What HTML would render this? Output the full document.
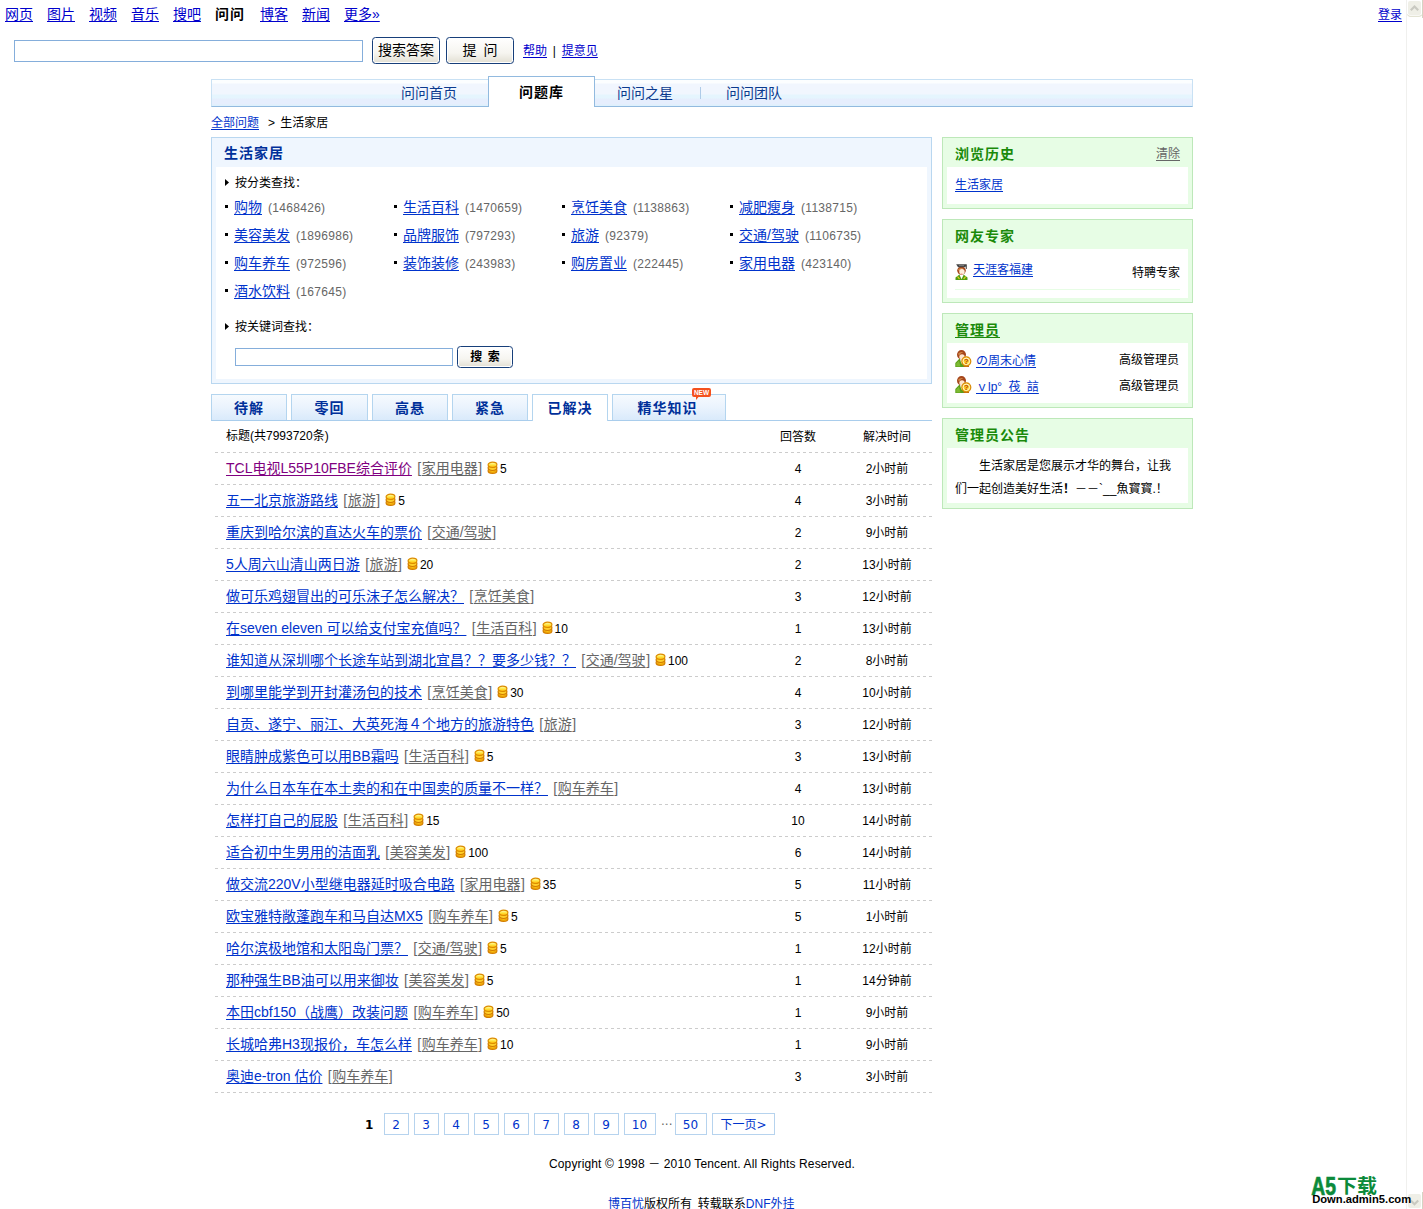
<!DOCTYPE html>
<html lang="zh-CN">
<head>
<meta charset="utf-8">
<title>生活家居 - 问问问题库</title>
<style>
html,body{margin:0;padding:0;background:#fff;}
body{width:1423px;height:1209px;position:relative;overflow:hidden;font-family:"Liberation Sans","Noto Sans CJK SC",sans-serif;font-size:12px;color:#000;line-height:14px;}
a{color:#03c;text-decoration:underline;text-underline-offset:2px;text-decoration-thickness:1px;}
h2{margin:0;font-size:14px;font-weight:bold;letter-spacing:1px;}
/* top nav */
#topnav{position:absolute;left:5px;top:5px;font-size:14px;line-height:18px;white-space:nowrap;}
#topnav a,#topnav b{display:inline-block;margin-right:14px;color:#00c;}
#topnav b{color:#000;margin-right:15px;letter-spacing:1px;}
#login{position:absolute;left:1378px;top:8px;font-size:12px;line-height:14px;color:#00c;}
#q{position:absolute;left:14px;top:40px;width:347px;height:20px;border:1px solid #85aedb;background:#fff;}
.btn{position:absolute;box-sizing:border-box;border:1px solid #173f7a;border-radius:3.5px;background:linear-gradient(#ffffff 0%,#f6f5f0 60%,#e2dfd3 100%);text-align:center;color:#000;box-shadow:inset 0 0 0 1px #fff;}
#b1{left:372px;top:37px;width:68px;height:27px;font-size:14px;line-height:25px;}
#b2{left:446px;top:37px;width:68px;height:27px;font-size:14px;line-height:25px;word-spacing:3px;}
#help{position:absolute;left:523px;top:44px;white-space:nowrap;word-spacing:2.5px;}
#help a{color:#00c;}
/* tab bar */
#bar{position:absolute;left:211px;top:79px;width:980px;height:26px;border:1px solid #c9e1f4;border-bottom-color:#92badf;background:linear-gradient(#fcfeff 0,#fcfeff 3px,#f1f6fe 4px,#f1f6fe 14px,#e5f5fe 15px,#e5f5fe 18px,#e6eefd 19px,#e6eefd 24px,#def0fc 25px);}
#bar a{position:absolute;top:5px;font-size:14px;line-height:16px;color:#0b3a8e;text-decoration:none;white-space:nowrap;}
#bar i{position:absolute;top:7px;width:1px;height:12px;background:#aecbe8;}
#cur{position:absolute;left:488px;top:76px;width:105px;height:30px;border:1px solid #92badf;border-bottom:0;background:#fff;text-align:center;font-size:14px;font-weight:bold;line-height:30px;letter-spacing:1px;}
#crumb{position:absolute;left:211px;top:116px;white-space:nowrap;}
#crumb span{position:absolute;left:57px;top:0;word-spacing:2px;}
/* main box */
#box{position:absolute;left:211px;top:137px;width:719px;height:245px;border:1px solid #b9d7f0;background:#eff6fe;}
#box h2{position:absolute;left:12px;top:6px;line-height:18px;color:#00309a;}
#boxin{position:absolute;left:4px;top:29px;width:711px;height:212px;background:#fff;}
.lbl{position:absolute;left:19px;margin-top:-1px;line-height:14px;white-space:nowrap;}
.tri{position:absolute;left:-10px;top:3px;width:4px;height:7px;background:#000;clip-path:polygon(0 0,100% 50%,0 100%);}
.cat{position:absolute;height:18px;line-height:18px;white-space:nowrap;font-size:14px;}
.cat .sq{display:inline-block;width:3px;height:3px;background:#000;vertical-align:middle;margin-right:6px;position:relative;top:-2px;}
.cat span{font-size:12px;color:#666;margin-left:6px;letter-spacing:0.3px;}
#kw{position:absolute;left:19px;top:181px;width:216px;height:16px;border:1px solid #85aedb;background:#fff;}
#b3{left:241px;top:179px;width:56px;height:22px;font-size:12px;line-height:20px;font-weight:bold;word-spacing:2px;}
/* tabs */
#tabs{position:absolute;left:211px;top:394px;width:721px;height:26px;border-bottom:1px solid #a9cdec;}
#tabs a{position:absolute;top:0;width:74px;height:25px;border:1px solid #b4d5ef;border-bottom:0;background:linear-gradient(#f6fafe 0%,#eaf3fd 50%,#d9eafb 100%);text-align:center;font-size:14px;font-weight:bold;line-height:27px;color:#00309a;text-decoration:none;letter-spacing:1px;}
#tabs a.on{background:#fff;height:26px;}
#new{position:absolute;left:481px;top:-6px;}
/* list */
#list{position:absolute;left:215px;top:421px;width:717px;}
#list .hd,#list .row{position:relative;height:32px;white-space:nowrap;background:repeating-linear-gradient(90deg,#ccc 0,#ccc 3px,transparent 3px,transparent 6px) 0 31px/100% 1px no-repeat;}
#list .hd{line-height:31px;}
#list .t{position:absolute;left:11px;top:0;line-height:31px;}
#list .n{position:absolute;top:1px;left:538px;width:90px;text-align:center;line-height:31px;}
#list .d{position:absolute;top:1px;left:627px;width:90px;text-align:center;line-height:31px;}
.row .t>a{font-size:14px;}
.row .t>a.v{color:#800080;}
.row .c{font-size:14px;color:#666;margin-left:2px;}
.row .c a{color:#666;margin:0 0.5px;}
.row .coin{vertical-align:middle;margin:0 2px 0 5px;position:relative;top:-2px;}
.row em{font-style:normal;}
/* sidebar */
.sb{position:absolute;left:942px;width:249px;border:1px solid #bde8b9;background:#e7fde5;}
.sb h2{position:absolute;left:12px;top:7px;line-height:18px;color:#1a8a0a;}
.sb .in{position:absolute;left:4px;top:29px;width:241px;background:#fff;}
.sb .r{position:absolute;right:12px;white-space:nowrap;}
.sb .l{position:absolute;white-space:nowrap;}
/* pager */
#pg{position:absolute;left:0;top:1113px;height:22px;font-family:"DejaVu Sans","Noto Sans CJK SC",sans-serif;font-size:12px;}
#pg a,#pg b,#pg i{position:absolute;top:0;height:20px;line-height:22px;text-align:center;font-style:normal;}
#pg b{line-height:24px;}
#pg i{line-height:24px;}
#pg a{border:1px solid #b6d3ee;text-decoration:none;color:#03c;text-indent:-1px;}
#copy{position:absolute;left:549px;top:1157px;white-space:nowrap;letter-spacing:0.135px;}
#foot{position:absolute;left:608px;top:1197px;white-space:nowrap;word-spacing:2.5px;}
#foot a{text-decoration:none;}
/* scrollbar + watermark */
#sbar{position:absolute;left:1406px;top:0;width:17px;height:1209px;background:#fff;}
#wm1{position:absolute;left:1310px;top:1173px;font-size:21px;line-height:24px;font-weight:bold;color:#0b8a3a;white-space:nowrap;letter-spacing:-0.5px;}
#wm2{position:absolute;left:1311px;top:1192px;font-size:11px;line-height:14px;font-weight:bold;color:#000;white-space:nowrap;font-family:"Liberation Sans",sans-serif;letter-spacing:0.2px;}
</style>
</head>
<body>
<svg width="0" height="0" style="position:absolute"><defs><linearGradient id="cg" x1="0" y1="0" x2="0" y2="1"><stop offset="0" stop-color="#fffcc0"/><stop offset="0.5" stop-color="#ffe640"/><stop offset="1" stop-color="#ffb000"/></linearGradient>
<g id="coin"><ellipse cx="5.5" cy="9.7" rx="4.4" ry="2.7" fill="#ffc61a" stroke="#d27c00" stroke-width="1.2"/><ellipse cx="5.5" cy="6.8" rx="4.4" ry="2.7" fill="#ffcf2a" stroke="#d27c00" stroke-width="1.2"/><ellipse cx="5.5" cy="3.8" rx="4.4" ry="2.7" fill="url(#cg)" stroke="#dc8c00" stroke-width="1.2"/><path d="M2.2 10.6Q5.5 12 8.8 10.6" stroke="#e89a00" stroke-width="1" fill="none"/></g>
<g id="grad"><path d="M0.5 16V13.5L4.5 10.5H8.5L12.5 13.5V16z" fill="#4f9d12"/><path d="M4.3 10.3L6.5 15.2L8.9 10.3z" fill="#fff"/><path d="M2.5 12.5L4.5 15M10.7 12.5L8.7 15" stroke="#f5d020" stroke-width="1.2"/><ellipse cx="6.5" cy="6.6" rx="4.3" ry="4" fill="#a5451a"/><path d="M3 5.2Q5.5 3.6 8.5 4.2Q6 5 4 7.5z" fill="#d08848"/><ellipse cx="7" cy="7.8" rx="2.7" ry="2.7" fill="#fdeedd"/><rect x="5.8" y="9.6" width="1.6" height="1" fill="#f08070"/><path d="M1.2 0.3H11.5L10.5 3.2H3z" fill="#444"/><path d="M4 1.6H9" stroke="#999" stroke-width="0.7"/><path d="M11.3 0.5V5" stroke="#444" stroke-width="1"/></g>
<g id="adm"><path d="M0.3 17V13L4.5 8.5H8.5L11 17z" fill="#5a9e18"/><path d="M1.2 16.5V13.6L4 10.8L5.5 16.5z" fill="#8cc63f" opacity="0.7"/><path d="M5 9L6.5 14L8 9z" fill="#fff"/><ellipse cx="6.5" cy="4.7" rx="4.5" ry="4.6" fill="#a5451a"/><path d="M3 3.8Q5 1.2 8.5 2.2Q6 2.8 4 5.5z" fill="#d08848"/><ellipse cx="7" cy="6.8" rx="2.7" ry="2.5" fill="#fde6cf"/><rect x="8.6" y="15.3" width="5.4" height="1.7" fill="#c06a10"/><circle cx="11.3" cy="11.3" r="4.5" fill="#ffd12c" stroke="#d98a08" stroke-width="1.2"/><circle cx="11.3" cy="11.3" r="3.2" fill="none" stroke="#fff" stroke-width="0.9" opacity="0.85"/><text x="11.3" y="14.2" font-size="8" font-weight="bold" text-anchor="middle" fill="#b8480a" font-family="Liberation Sans, sans-serif">?</text></g>
</defs></svg>
<div id="topnav"><a href="#">网页</a><a href="#">图片</a><a href="#">视频</a><a href="#">音乐</a><a href="#">搜吧</a><b>问问</b><a href="#">博客</a><a href="#">新闻</a><a href="#">更多»</a></div>
<a id="login" href="#">登录</a>
<div id="q"></div>
<div class="btn" id="b1">搜索答案</div>
<div class="btn" id="b2">提 问</div>
<div id="help"><a href="#">帮助</a> | <a href="#">提意见</a></div>
<div id="bar"><a href="#" style="left:189px">问问首页</a><a href="#" style="left:405px">问问之星</a><i style="left:488px"></i><a href="#" style="left:514px">问问团队</a></div>
<div id="cur">问题库</div>
<div id="crumb"><a href="#">全部问题</a><span>&gt; 生活家居</span></div>
<div id="box"><h2>生活家居</h2><div id="boxin">
<div class="lbl" style="top:10px"><i class="tri"></i>按分类查找：</div>
<div class="cat" style="left:9px;top:31px"><i class="sq"></i><a href="#">购物</a><span>(1468426)</span></div>
<div class="cat" style="left:178px;top:31px"><i class="sq"></i><a href="#">生活百科</a><span>(1470659)</span></div>
<div class="cat" style="left:346px;top:31px"><i class="sq"></i><a href="#">烹饪美食</a><span>(1138863)</span></div>
<div class="cat" style="left:514px;top:31px"><i class="sq"></i><a href="#">减肥瘦身</a><span>(1138715)</span></div>
<div class="cat" style="left:9px;top:59px"><i class="sq"></i><a href="#">美容美发</a><span>(1896986)</span></div>
<div class="cat" style="left:178px;top:59px"><i class="sq"></i><a href="#">品牌服饰</a><span>(797293)</span></div>
<div class="cat" style="left:346px;top:59px"><i class="sq"></i><a href="#">旅游</a><span>(92379)</span></div>
<div class="cat" style="left:514px;top:59px"><i class="sq"></i><a href="#">交通/驾驶</a><span>(1106735)</span></div>
<div class="cat" style="left:9px;top:87px"><i class="sq"></i><a href="#">购车养车</a><span>(972596)</span></div>
<div class="cat" style="left:178px;top:87px"><i class="sq"></i><a href="#">装饰装修</a><span>(243983)</span></div>
<div class="cat" style="left:346px;top:87px"><i class="sq"></i><a href="#">购房置业</a><span>(222445)</span></div>
<div class="cat" style="left:514px;top:87px"><i class="sq"></i><a href="#">家用电器</a><span>(423140)</span></div>
<div class="cat" style="left:9px;top:115px"><i class="sq"></i><a href="#">酒水饮料</a><span>(167645)</span></div>
<div class="lbl" style="top:154px"><i class="tri"></i>按关键词查找：</div>
<div id="kw"></div><div class="btn" id="b3">搜 索</div>
</div></div>
<div id="tabs"><a href="#" style="left:0">待解</a><a href="#" style="left:80px;width:75px">零回</a><a href="#" style="left:161px">高悬</a><a href="#" style="left:241px">紧急</a><a href="#" class="on" style="left:321px">已解决</a><a href="#" style="left:401px;width:112px;text-indent:-3px">精华知识</a><svg id="new" width="19" height="12" viewBox="0 0 19 12"><path d="M2 0h15a2 2 0 0 1 2 2v5a2 2 0 0 1-2 2H6.5L4 12V9H2a2 2 0 0 1-2-2V2a2 2 0 0 1 2-2z" fill="#f4511e"/><text x="9.5" y="7.2" font-size="6.5" font-weight="bold" text-anchor="middle" fill="#fff" font-family="Liberation Sans, sans-serif">NEW</text></svg></div>
<div id="list">
<div class="hd"><span class="t">标题(共7993720条)</span><span class="n">回答数</span><span class="d">解决时间</span></div>
<div class="row"><span class="t"><a href="#" class="v">TCL电视L55P10FBE综合评价</a> <span class="c">[<a href="#">家用电器</a>]</span><svg class="coin" width="11" height="13" viewBox="0 0 11 13"><use href="#coin"/></svg><em>5</em></span><span class="n">4</span><span class="d">2小时前</span></div>
<div class="row"><span class="t"><a href="#">五一北京旅游路线</a> <span class="c">[<a href="#">旅游</a>]</span><svg class="coin" width="11" height="13" viewBox="0 0 11 13"><use href="#coin"/></svg><em>5</em></span><span class="n">4</span><span class="d">3小时前</span></div>
<div class="row"><span class="t"><a href="#">重庆到哈尔滨的直达火车的票价</a> <span class="c">[<a href="#">交通/驾驶</a>]</span></span><span class="n">2</span><span class="d">9小时前</span></div>
<div class="row"><span class="t"><a href="#">5人周六山清山两日游</a> <span class="c">[<a href="#">旅游</a>]</span><svg class="coin" width="11" height="13" viewBox="0 0 11 13"><use href="#coin"/></svg><em>20</em></span><span class="n">2</span><span class="d">13小时前</span></div>
<div class="row"><span class="t"><a href="#">做可乐鸡翅冒出的可乐沫子怎么解决？</a> <span class="c">[<a href="#">烹饪美食</a>]</span></span><span class="n">3</span><span class="d">12小时前</span></div>
<div class="row"><span class="t"><a href="#">在seven eleven 可以给支付宝充值吗？</a> <span class="c">[<a href="#">生活百科</a>]</span><svg class="coin" width="11" height="13" viewBox="0 0 11 13"><use href="#coin"/></svg><em>10</em></span><span class="n">1</span><span class="d">13小时前</span></div>
<div class="row"><span class="t"><a href="#">谁知道从深圳哪个长途车站到湖北宜昌？？要多少钱？？</a> <span class="c">[<a href="#">交通/驾驶</a>]</span><svg class="coin" width="11" height="13" viewBox="0 0 11 13"><use href="#coin"/></svg><em>100</em></span><span class="n">2</span><span class="d">8小时前</span></div>
<div class="row"><span class="t"><a href="#">到哪里能学到开封灌汤包的技术</a> <span class="c">[<a href="#">烹饪美食</a>]</span><svg class="coin" width="11" height="13" viewBox="0 0 11 13"><use href="#coin"/></svg><em>30</em></span><span class="n">4</span><span class="d">10小时前</span></div>
<div class="row"><span class="t"><a href="#">自贡、遂宁、丽江、大英死海４个地方的旅游特色</a> <span class="c">[<a href="#">旅游</a>]</span></span><span class="n">3</span><span class="d">12小时前</span></div>
<div class="row"><span class="t"><a href="#">眼睛肿成紫色可以用BB霜吗</a> <span class="c">[<a href="#">生活百科</a>]</span><svg class="coin" width="11" height="13" viewBox="0 0 11 13"><use href="#coin"/></svg><em>5</em></span><span class="n">3</span><span class="d">13小时前</span></div>
<div class="row"><span class="t"><a href="#">为什么日本车在本土卖的和在中国卖的质量不一样？</a> <span class="c">[<a href="#">购车养车</a>]</span></span><span class="n">4</span><span class="d">13小时前</span></div>
<div class="row"><span class="t"><a href="#">怎样打自己的屁股</a> <span class="c">[<a href="#">生活百科</a>]</span><svg class="coin" width="11" height="13" viewBox="0 0 11 13"><use href="#coin"/></svg><em>15</em></span><span class="n">10</span><span class="d">14小时前</span></div>
<div class="row"><span class="t"><a href="#">适合初中生男用的洁面乳</a> <span class="c">[<a href="#">美容美发</a>]</span><svg class="coin" width="11" height="13" viewBox="0 0 11 13"><use href="#coin"/></svg><em>100</em></span><span class="n">6</span><span class="d">14小时前</span></div>
<div class="row"><span class="t"><a href="#">做交流220V小型继电器延时吸合电路</a> <span class="c">[<a href="#">家用电器</a>]</span><svg class="coin" width="11" height="13" viewBox="0 0 11 13"><use href="#coin"/></svg><em>35</em></span><span class="n">5</span><span class="d">11小时前</span></div>
<div class="row"><span class="t"><a href="#">欧宝雅特敞蓬跑车和马自达MX5</a> <span class="c">[<a href="#">购车养车</a>]</span><svg class="coin" width="11" height="13" viewBox="0 0 11 13"><use href="#coin"/></svg><em>5</em></span><span class="n">5</span><span class="d">1小时前</span></div>
<div class="row"><span class="t"><a href="#">哈尔滨极地馆和太阳岛门票？</a> <span class="c">[<a href="#">交通/驾驶</a>]</span><svg class="coin" width="11" height="13" viewBox="0 0 11 13"><use href="#coin"/></svg><em>5</em></span><span class="n">1</span><span class="d">12小时前</span></div>
<div class="row"><span class="t"><a href="#">那种强生BB油可以用来御妆</a> <span class="c">[<a href="#">美容美发</a>]</span><svg class="coin" width="11" height="13" viewBox="0 0 11 13"><use href="#coin"/></svg><em>5</em></span><span class="n">1</span><span class="d">14分钟前</span></div>
<div class="row"><span class="t"><a href="#">本田cbf150（战鹰）改装问题</a> <span class="c">[<a href="#">购车养车</a>]</span><svg class="coin" width="11" height="13" viewBox="0 0 11 13"><use href="#coin"/></svg><em>50</em></span><span class="n">1</span><span class="d">9小时前</span></div>
<div class="row"><span class="t"><a href="#">长城哈弗H3现报价，车怎么样</a> <span class="c">[<a href="#">购车养车</a>]</span><svg class="coin" width="11" height="13" viewBox="0 0 11 13"><use href="#coin"/></svg><em>10</em></span><span class="n">1</span><span class="d">9小时前</span></div>
<div class="row"><span class="t"><a href="#">奥迪e-tron 估价</a> <span class="c">[<a href="#">购车养车</a>]</span></span><span class="n">3</span><span class="d">3小时前</span></div>
</div>
<div class="sb" style="top:137px;height:70px"><h2>浏览历史</h2><a href="#" class="r" style="top:9px;color:#666">清除</a><div class="in" style="height:37px"><a href="#" class="l" style="left:8px;top:11px">生活家居</a></div></div>
<div class="sb" style="top:219px;height:82px"><h2>网友专家</h2><div class="in" style="height:49px"><svg class="l" style="left:8px;top:15px" width="13" height="16" viewBox="0 0 13 16"><use href="#grad"/></svg><a href="#" class="l" style="left:26px;top:14px">天涯客福建</a><span class="r" style="right:8px;top:17px">特聘专家</span><div class="l" style="left:8px;top:40px;width:225px;height:1px;background:#e7fde5"></div></div></div>
<div class="sb" style="top:313px;height:93px"><h2><a href="#" style="color:#1a8a0a">管理员</a></h2><div class="in" style="height:60px"><svg class="l" style="left:8px;top:7px" width="17" height="17" viewBox="0 0 17 17"><use href="#adm"/></svg><a href="#" class="l" style="left:29px;top:11px">の周末心情</a><span class="r" style="right:9px;top:10px">高级管理员</span><svg class="l" style="left:8px;top:33px" width="17" height="17" viewBox="0 0 17 17"><use href="#adm"/></svg><a href="#" class="l" style="left:29px;top:37px;word-spacing:3px">ｖlp° 茷 誩</a><span class="r" style="right:9px;top:36px">高级管理员</span></div></div>
<div class="sb" style="top:418px;height:89px"><h2>管理员公告</h2><div class="in" style="height:55px"><div class="l" style="left:8px;top:7px;width:226px;line-height:23px;text-indent:24px;white-space:normal">生活家居是您展示才华的舞台，让我们一起创造美好生活<b>！</b>－－`__魚寳寳.！</div></div></div>
<div id="pg"><b style="left:365px;width:8px">1</b><a href="#" style="left:384px;width:23px">2</a><a href="#" style="left:414px;width:23px">3</a><a href="#" style="left:444px;width:23px">4</a><a href="#" style="left:474px;width:23px">5</a><a href="#" style="left:504px;width:23px">6</a><a href="#" style="left:534px;width:23px">7</a><a href="#" style="left:564px;width:23px">8</a><a href="#" style="left:594px;width:23px">9</a><a href="#" style="left:624px;width:30px">10</a><i style="left:661px;width:9px;color:#666">···</i><a href="#" style="left:675px;width:30px">50</a><a href="#" style="left:712px;width:61px;text-indent:0">下一页&gt;</a></div>
<div id="copy">Copyright © 1998 － 2010 Tencent. All Rights Reserved.</div>
<div id="foot"><a href="#">博百忧</a>版权所有 转载联系<a href="#">DNF外挂</a></div>
<div id="sbar"><svg width="17" height="1209" viewBox="0 0 17 1209" style="position:absolute;left:0;top:0"><rect x="0" y="0" width="1" height="1209" fill="#f0f0ee"/><rect x="16" y="0" width="1" height="18" fill="#d4d4c4"/><rect x="16" y="1192" width="1" height="17" fill="#d4d4c4"/><path d="M1.5 14.5Q2 16.3 4 16.3H13Q15.5 16.3 16 14.5" fill="none" stroke="#dcdcc8" stroke-width="1"/><rect x="2" y="1" width="13" height="14" rx="2" fill="#efefe7"/><path d="M4.8 10.2L8.5 6.5L12.2 10.2" fill="none" stroke="#c9c9c1" stroke-width="2.2"/><rect x="2" y="1194" width="13" height="14" rx="2" fill="#efefe7"/><path d="M4.8 1200.5L8.5 1204.2L12.2 1200.5" fill="none" stroke="#c9c9c1" stroke-width="2.2"/></svg></div>
<svg id="wm" width="118" height="39" viewBox="0 0 118 39" style="position:absolute;left:1305px;top:1170px"><text x="6.3" y="24.7" font-size="25.4" font-weight="bold" fill="#0b8a3a" stroke="#0b8a3a" stroke-width="0.7" textLength="24.7" lengthAdjust="spacingAndGlyphs" font-family="Liberation Sans, sans-serif">A5</text><text x="32" y="23.3" font-size="19.5" font-weight="bold" fill="#0b8a3a" textLength="40" lengthAdjust="spacingAndGlyphs" font-family="Noto Sans CJK SC, sans-serif">下载</text><text x="7.2" y="33" font-size="11" font-weight="bold" fill="#000" textLength="99" lengthAdjust="spacingAndGlyphs" font-family="Liberation Sans, sans-serif">Down.admin5.com</text></svg>
</body>
</html>
